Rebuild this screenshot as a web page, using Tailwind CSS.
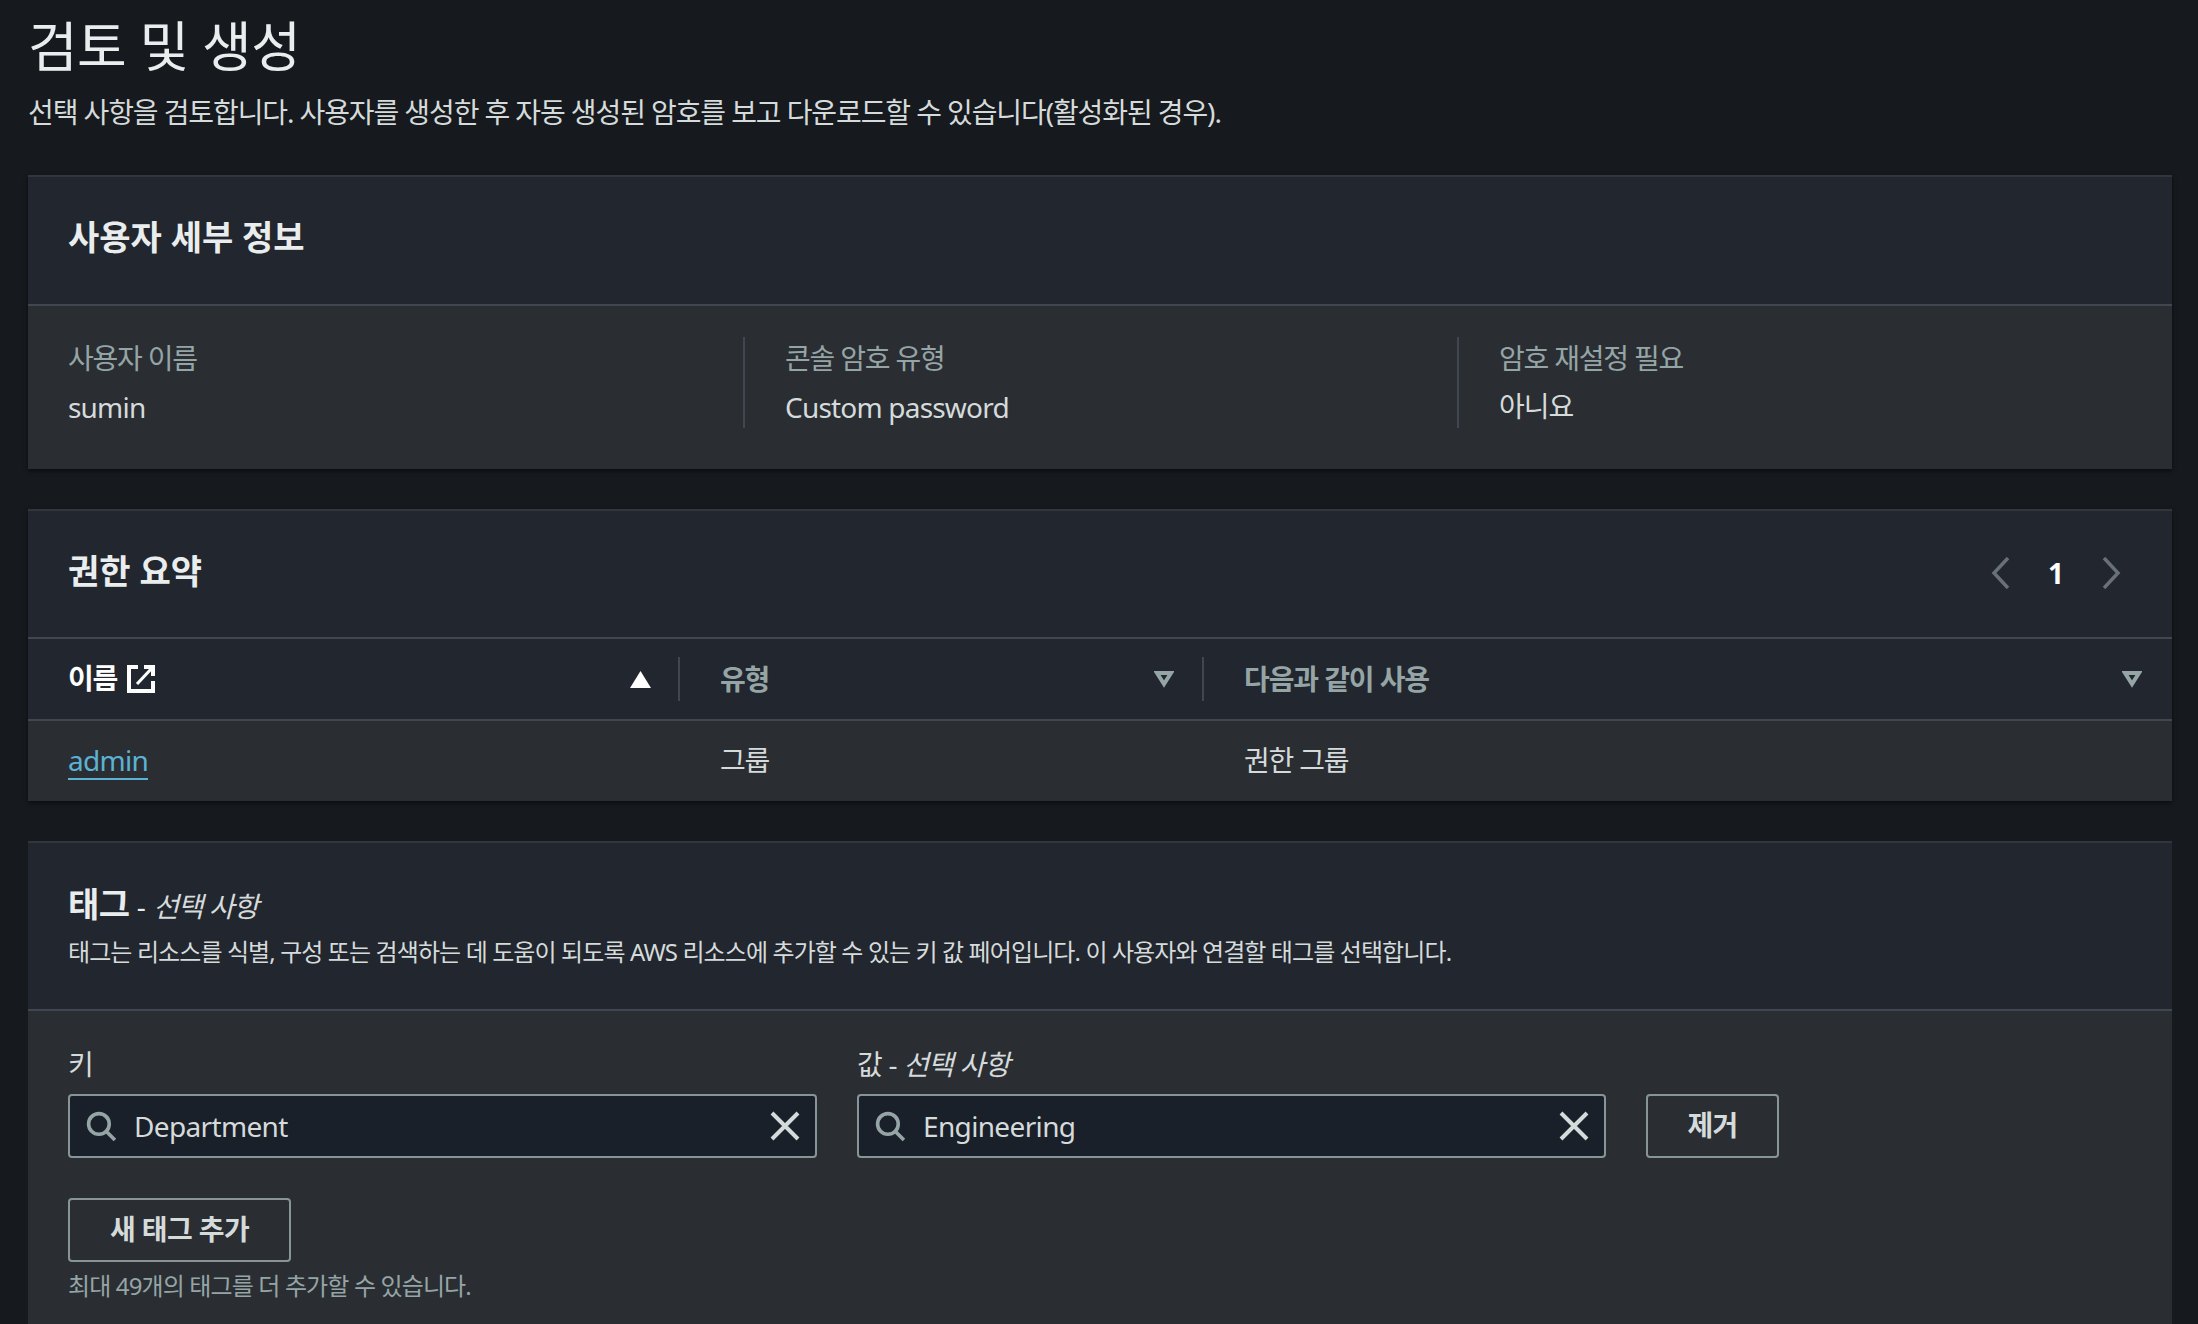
<!DOCTYPE html>
<html lang="ko">
<head>
    <meta charset="UTF-8">
    <title>검토 및 생성</title>
    <script src="https://cdn.jsdelivr.net/npm/@tailwindcss/browser@4"></script>
</head>
<body class="bg-[#16191e] h-[1324px] overflow-hidden font-['Noto_Sans','Noto_Sans_CJK_KR',sans-serif] text-[28px] leading-[40px] text-[#d5dbdb]">
    <div class="w-[2198px] px-[28px]">
        <!-- page title -->
        <h1 class="h-[88px] pt-[10px] text-[54px] leading-[72px] font-normal tracking-[-0.6px] text-[#eaeded]">검토 및 생성</h1>
        <p class="h-[87px] pt-[4px] tracking-[-1.1px] text-[#d5dbdb]">선택 사항을 검토합니다. 사용자를 생성한 후 자동 생성된 암호를 보고 다운로드할 수 있습니다(활성화된 경우).</p>

        <!-- user details -->
        <section class="w-[2144px] bg-[#2a2e33] border-t-2 border-[#32363c] shadow-[0_2px_4px_rgba(0,0,0,0.5)]">
            <div class="h-[127px] bg-[#22262e] flex items-center px-[40px] pb-[7px]">
                <h2 class="text-[34px] leading-[48px] font-bold text-[#eaeded]">사용자 세부 정보</h2>
            </div>
            <div class="h-[165px] border-t-2 border-[#414750] flex pt-[31px]">
                <div class="w-[717px] h-[91px] pl-[40px] border-r-2 border-[#414750]">
                    <div class="text-[#95a5a6] leading-[42px] tracking-[-1.2px]">사용자 이름</div>
                    <div class="leading-[56px] tracking-[-0.8px]">sumin</div>
                </div>
                <div class="w-[714px] h-[91px] pl-[40px] border-r-2 border-[#414750]">
                    <div class="text-[#95a5a6] leading-[42px] tracking-[-1.2px]">콘솔 암호 유형</div>
                    <div class="leading-[56px] tracking-[-0.8px]">Custom password</div>
                </div>
                <div class="pl-[40px]">
                    <div class="text-[#95a5a6] leading-[42px] tracking-[-1.2px]">암호 재설정 필요</div>
                    <div class="leading-[54px] tracking-[-1px]">아니요</div>
                </div>
            </div>
        </section>

        <!-- permissions -->
        <section class="w-[2144px] mt-[40px] bg-[#2a2e33] border-t-2 border-[#32363c] shadow-[0_2px_4px_rgba(0,0,0,0.5)]">
            <div class="h-[126px] bg-[#22262e] flex items-center justify-between px-[40px] pb-[6px]">
                <h2 class="text-[34px] leading-[48px] font-bold text-[#eaeded]">권한 요약</h2>
                <div class="flex items-center gap-[36px] pr-[8px] mt-[4px]">
                    <svg class="w-[24px] h-[32px]" viewBox="0 0 24 32" fill="none" stroke="#687078" stroke-width="3.5"><path d="M20 1 L6 16 L20 31"/></svg>
                    <span class="font-bold text-white leading-[32px]">1</span>
                    <svg class="w-[24px] h-[32px]" viewBox="0 0 24 32" fill="none" stroke="#687078" stroke-width="3.5"><path d="M4 1 L18 16 L4 31"/></svg>
                </div>
            </div>
            <div class="h-[82px] bg-[#22262e] border-t-2 border-[#414750] flex items-center font-bold">
                <div class="w-[652px] h-[44px] pl-[40px] pr-[27px] flex items-center justify-between border-r-2 border-[#414750] text-white">
                    <span class="flex items-center gap-[10px] tracking-[-1.2px]"><span class="mt-[-2px]">이름</span>
                        <svg class="w-[28px] h-[28px]" viewBox="0 0 28 28" fill="none" stroke="#ffffff" stroke-width="4"><path d="M11 2 H2 V26 H26 V16"/><path d="M17 2 H26 V11"/><path d="M25 3 L10 19" stroke-width="3"/></svg>
                    </span>
                    <svg class="w-[21px] h-[17px]" viewBox="0 0 21 17"><path d="M10.5 0 L21 17 H0 Z" fill="#ffffff"/></svg>
                </div>
                <div class="w-[524px] h-[44px] pl-[40px] pr-[28px] flex items-center justify-between border-r-2 border-[#414750] text-[#95a5a6]">
                    <span class="tracking-[-1.2px]">유형</span>
                    <svg class="w-[20px] h-[17px]" viewBox="0 0 20 17" fill="none" stroke="#95a5a6" stroke-width="4"><path d="M3 2 H17 L10 13 Z"/></svg>
                </div>
                <div class="flex-1 h-[44px] pl-[40px] pr-[30px] flex items-center justify-between text-[#95a5a6]">
                    <span class="tracking-[-1.1px]">다음과 같이 사용</span>
                    <svg class="w-[20px] h-[17px]" viewBox="0 0 20 17" fill="none" stroke="#95a5a6" stroke-width="4"><path d="M3 2 H17 L10 13 Z"/></svg>
                </div>
            </div>
            <div class="h-[82px] border-t-2 border-[#414750] flex items-center pb-[2px]">
                <div class="w-[652px] pl-[40px]"><a class="text-[#5cb2d3] border-b-2 border-[#5cb2d3] leading-[36px] inline-block tracking-[-0.7px]">admin</a></div>
                <div class="w-[524px] pl-[40px] tracking-[-1.2px]">그룹</div>
                <div class="pl-[40px] tracking-[-1.2px]">권한 그룹</div>
            </div>
        </section>

        <!-- tags -->
        <section class="w-[2144px] mt-[40px] bg-[#2a2e33] border-t-2 border-[#32363c]">
            <div class="h-[166px] bg-[#22262e] pl-[40px] pt-[35px]">
                <h2 class="leading-[52px] text-[#eaeded]"><span class="text-[34px] font-bold tracking-[-0.5px]">태그</span> - <i class="text-[#d5dbdb] tracking-[-1.1px]">선택 사항</i></h2>
                <p class="text-[24px] leading-[40px] tracking-[-0.9px]">태그는 리소스를 식별, 구성 또는 검색하는 데 도움이 되도록 AWS 리소스에 추가할 수 있는 키 값 페어입니다. 이 사용자와 연결할 태그를 선택합니다.</p>
            </div>
            <div class="h-[316px] border-t-2 border-[#414750] pl-[40px] pt-[33px]">
                <div class="flex gap-[40px] items-start">
                    <div class="w-[749px]">
                        <div class="leading-[40px] h-[50px]">키</div>
                        <div class="h-[64px] bg-[#1a2029] border-2 border-[#879596] rounded-[4px] flex items-center pl-[16px] pr-[15px]">
                            <svg class="w-[31px] h-[31px] shrink-0" viewBox="0 0 30 30" fill="none" stroke="#95a5a6" stroke-width="3.5"><circle cx="12.5" cy="12.5" r="10"/><path d="M20 20 L28 28"/></svg>
                            <span class="ml-[17px] flex-1 tracking-[-0.65px]">Department</span>
                            <svg class="w-[30px] h-[30px] shrink-0" viewBox="0 0 30 30" fill="none" stroke="#d5dbdb" stroke-width="4"><path d="M2 2 L28 28 M28 2 L2 28"/></svg>
                        </div>
                    </div>
                    <div class="w-[749px]">
                        <div class="leading-[40px] h-[50px] tracking-[-0.8px]">값 - <i>선택 사항</i></div>
                        <div class="h-[64px] bg-[#1a2029] border-2 border-[#879596] rounded-[4px] flex items-center pl-[16px] pr-[15px]">
                            <svg class="w-[31px] h-[31px] shrink-0" viewBox="0 0 30 30" fill="none" stroke="#95a5a6" stroke-width="3.5"><circle cx="12.5" cy="12.5" r="10"/><path d="M20 20 L28 28"/></svg>
                            <span class="ml-[17px] flex-1 tracking-[-0.65px]">Engineering</span>
                            <svg class="w-[30px] h-[30px] shrink-0" viewBox="0 0 30 30" fill="none" stroke="#d5dbdb" stroke-width="4"><path d="M2 2 L28 28 M28 2 L2 28"/></svg>
                        </div>
                    </div>
                    <button class="w-[133px] h-[64px] mt-[50px] border-2 border-[#879596] rounded-[4px] font-bold tracking-[-0.8px] pb-[2px]">제거</button>
                </div>
                <button class="w-[223px] h-[64px] mt-[40px] border-2 border-[#879596] rounded-[4px] font-bold block tracking-[-0.6px] pb-[2px]">새 태그 추가</button>
                <p class="text-[24px] leading-[34px] mt-[7px] tracking-[-0.87px] text-[#95a5a6]">최대 49개의 태그를 더 추가할 수 있습니다.</p>
            </div>
        </section>
    </div>
</body>
</html>
